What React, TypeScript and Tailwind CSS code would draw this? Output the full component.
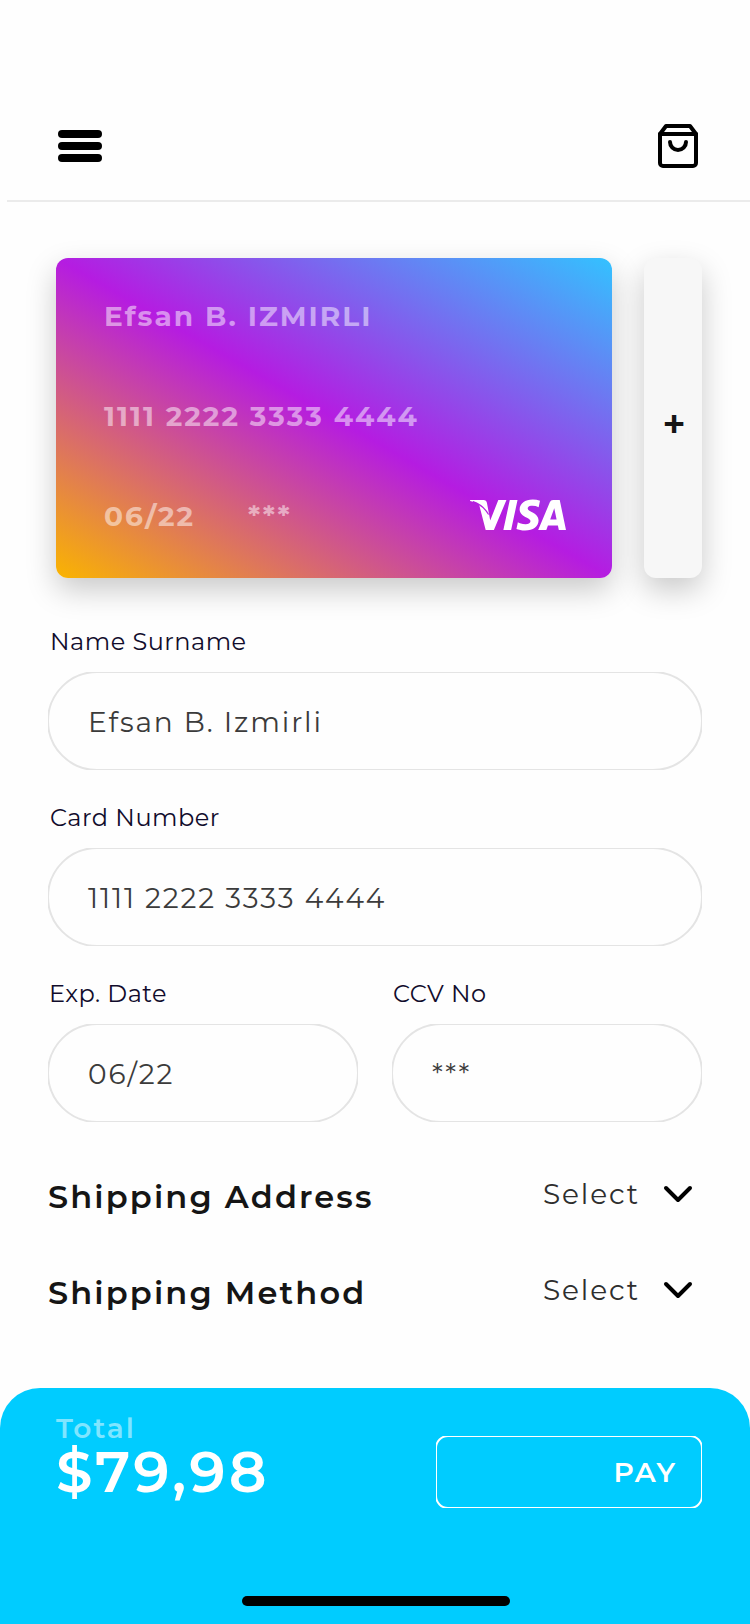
import type { ReactNode } from 'react';
import { SiVisa } from 'react-icons/si';

function MenuIcon() {
  return (
    <button aria-label="Menu" className="mt-2 flex w-11 flex-col gap-1">
      <span className="h-2 rounded-full bg-black" />
      <span className="h-2 rounded-full bg-black" />
      <span className="h-2 rounded-full bg-black" />
    </button>
  );
}

function BagIcon() {
  return (
    <svg className="size-12" viewBox="0 0 24 24" fill="none" stroke="black" strokeWidth="2" strokeLinecap="round" strokeLinejoin="round">
      <path d="M6 2 3 6v14.5A1.5 1.5 0 0 0 4.5 22h15a1.5 1.5 0 0 0 1.5-1.5V6l-3-4z" />
      <path d="M3 6h18" />
      <path d="M16 10a4 4 0 0 1-8 0" />
    </svg>
  );
}

function ChevronIcon() {
  return (
    <svg className="size-12" viewBox="0 0 24 24" fill="none" stroke="black" strokeWidth="2" strokeLinecap="round" strokeLinejoin="round">
      <path d="m6 9 6 6 6-6" />
    </svg>
  );
}

function VisaLogo() {
  return (
    <div className="relative mt-[-2px] h-8 w-24 text-white">
      <SiVisa className="-mt-8 size-24" />
      <svg className="absolute top-0 left-0 h-8 w-24" viewBox="0 0 96 32" fill="none">
        <path d="M3 2.6C9.5 4.8 14.5 8.5 18.6 15.5" stroke="#b41fe0" strokeWidth="1.2" />
      </svg>
    </div>
  );
}

function Field({ label, children, labelClass = 'pl-px' }: { label: string; children: ReactNode; labelClass?: string }) {
  return (
    <label className="flex min-w-0 flex-1 flex-col">
      <span className={`mb-[15px] text-[24px] leading-[31px] tracking-[0.5px] text-[#110c2c] ${labelClass}`}>{label}</span>
      <span className="block h-[98px] overflow-hidden">
        <span className="-m-px block h-[100px] rounded-full border-2 border-[#e4e4e4] pt-[29px] pl-[39px] text-[28px] leading-10 tracking-[1.86px] text-[#3b3b3b]">
          {children}
        </span>
      </span>
    </label>
  );
}

function SelectRow({ title }: { title: string }) {
  return (
    <div className="flex h-12 items-start">
      <h2 className="mt-[7px] flex-1 text-[32px] leading-[39px] font-semibold tracking-[2.15px] text-[#151515]">{title}</h2>
      <span className="mt-[7px] mr-[14px] text-[28px] leading-[34px] tracking-[1.86px] text-[#2e2e2e]">Select</span>
      <ChevronIcon />
    </div>
  );
}

export default function App() {
  return (
    <div className="flex h-[1624px] w-[750px] flex-col overflow-hidden bg-[#fefefe] font-['Montserrat','Inter',sans-serif]">
      <header className="flex h-[200px] items-start justify-between pt-[122px] pr-12 pl-[58px]">
        <MenuIcon />
        <BagIcon />
      </header>
      <div className="ml-[7px] h-0.5 shrink-0 bg-[#ebebeb]" />

      <section className="mt-14 flex shrink-0 gap-8 pl-14">
        <div className="flex h-80 w-[556px] flex-col gap-[60px] rounded-xl bg-[linear-gradient(to_top_right,#fab400_0%,#b51ce1_50%,#33c2ff_100%)] pt-[38px] pl-12 text-[28px] leading-10 font-bold tracking-[2px] text-white/50 shadow-[0_12px_30px_rgba(0,0,0,0.21)]">
          <p>Efsan B. IZMIRLI</p>
          <p>1111 2222 3333 4444</p>
          <div className="flex items-center pr-[46px]">
            <span className="w-36">06/22</span>
            <span className="flex-1">***</span>
            <VisaLogo />
          </div>
        </div>
        <button className="flex h-80 w-[58px] items-center justify-center rounded-xl bg-[#f7f7f7] pt-3 pl-0.5 text-[40px] leading-[48px] font-semibold text-[#151515] shadow-[0_12px_30px_rgba(0,0,0,0.21)]">
          +
        </button>
      </section>

      <section className="mt-12 flex shrink-0 flex-col gap-8 px-12">
        <Field label="Name Surname" labelClass="pl-0.5">Efsan B. Izmirli</Field>
        <Field label="Card Number" labelClass="pl-0.5">1111 2222 3333 4444</Field>
        <div className="flex gap-[34px]">
          <Field label="Exp. Date">06/22</Field>
          <Field label="CCV No">***</Field>
        </div>
      </section>

      <section className="mt-12 flex shrink-0 flex-col gap-12 px-12">
        <SelectRow title="Shipping Address" />
        <SelectRow title="Shipping Method" />
      </section>

      <footer className="mt-auto flex h-[236px] shrink-0 flex-col justify-between rounded-t-[40px] bg-[#00ccff] pb-[18px] text-white">
        <div className="flex items-start justify-between pr-12 pl-14">
          <div className="pt-[27px]">
            <p className="text-[28px] leading-[26px] font-semibold tracking-[2px] text-white/50">Total</p>
            <p className="text-[58px] leading-[61px] font-semibold tracking-[3.1px]">$79,98</p>
          </div>
          <button className="mt-12 h-[72px] w-[266px] overflow-hidden">
            <span className="-m-px flex h-[74px] items-center justify-end rounded-[13px] border-2 border-white pr-[24px] text-[28px] leading-[34px] font-semibold tracking-[2.1px]">
              PAY
            </span>
          </button>
        </div>
        <div className="ml-[242px] h-2.5 w-[268px] rounded-full bg-black" />
      </footer>
    </div>
  );
}
